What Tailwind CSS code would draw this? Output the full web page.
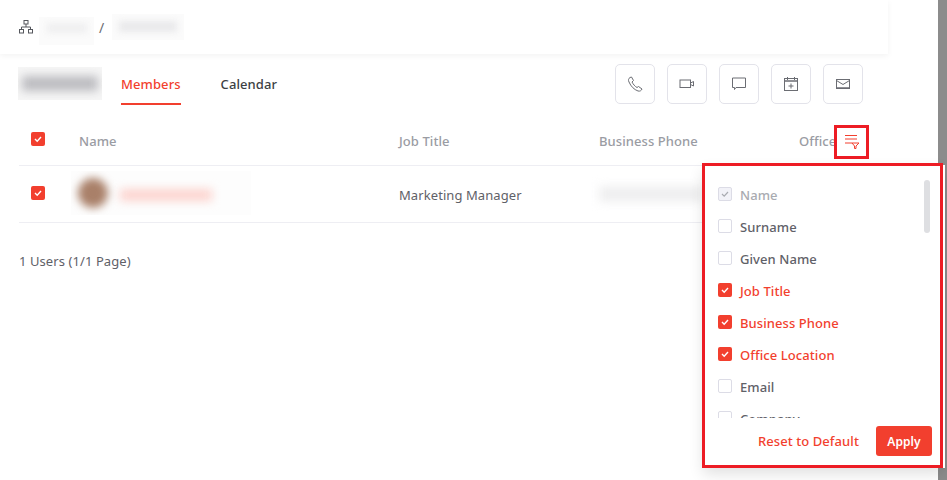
<!DOCTYPE html>
<html lang="en">
<head>
  <meta charset="UTF-8" />
  <title>Members</title>
  <script src="https://cdn.jsdelivr.net/npm/@tailwindcss/browser@4"></script>
</head>
<body class="bg-white">
  <div class="relative w-[947px] h-[480px] overflow-hidden flex font-['Noto_Sans',sans-serif] text-[13px] tracking-[0.08px] text-[#5f6168]">
    <!-- Page -->
    <main class="w-[938px] h-full flex flex-col">
      <!-- Breadcrumb -->
      <header class="w-[888px] h-[54px] shrink-0 flex items-center pl-[18px] shadow-[0_2px_6px_rgba(0,0,0,0.05)]">
        <svg class="w-[16px] h-[16px] text-[#55575d]" viewBox="0 0 16 16" fill="none" stroke="currentColor" stroke-width="1">
          <rect x="6" y="1.500" width="4" height="3.500" />
          <rect x="1.500" y="10.500" width="4" height="3.500" />
          <rect x="10.500" y="10.500" width="4" height="3.500" />
          <path d="M8 5v3M3.500 10.500V8h9v2.500" />
        </svg>
        <div class="ml-[5px] mt-[8px] w-[55px] h-[28px] bg-[#fbfbfb] overflow-hidden flex items-start justify-center pt-[6px]">
          <div class="w-[40px] h-[10px] bg-[#efeff0] blur-[3px]"></div>
        </div>
        <span class="ml-[5px] text-[#6b6d73] text-[14px]">/</span>
        <div class="ml-[8px] -mt-[1px] w-[72px] h-[26px] bg-[#fbfbfb] overflow-hidden flex items-center justify-center">
          <div class="w-[58px] h-[11px] bg-[#e9e9eb] blur-[3px]"></div>
        </div>
      </header>

      <!-- Tabs and actions -->
      <div class="h-[64px] shrink-0 flex items-start pl-[18px] pr-[75px]">
        <div class="mt-[13px] w-[84px] h-[33px] bg-[#f6f6f6] overflow-hidden flex items-center justify-center">
          <div class="w-[76px] h-[15px] bg-[#bcbcc0] blur-[5px]"></div>
        </div>
        <nav class="flex ml-[19px] text-[13px] font-medium">
          <a class="mt-[21px] h-[30px] border-b-2 border-[#f23f2e] text-[#f23f2e]">Members</a>
          <a class="mt-[21px] ml-[40px] text-[#3d3f44]">Calendar</a>
        </nav>
        <div class="ml-auto mt-[10px] flex gap-[12px]">
          <button class="w-[40px] h-[40px] flex items-center justify-center rounded-[5px] border border-[#e3e3ea] text-[#6b6d73]">
            <svg class="w-[16px] h-[16px]" viewBox="0 0 16 16" fill="none" stroke="currentColor" stroke-width="1"><path d="M3 1.500C1.500 2.500 1 4 2 6c2 4.500 5 7.500 9 9 2 .5 3.500-.5 4-2l-3.500-2.500L10 11.500C8 10.500 6 8 5 6l1.500-1.500-2-3.500Z" /></svg>
          </button>
          <button class="w-[40px] h-[40px] flex items-center justify-center rounded-[5px] border border-[#e3e3ea] text-[#6b6d73]">
            <svg class="w-[16px] h-[16px]" viewBox="0 0 16 16" fill="none" stroke="currentColor" stroke-width="1"><rect x="1" y="4" width="10.500" height="7.500" /><path d="M11.500 7l3-1.500v4.500l-3-1.500" /></svg>
          </button>
          <button class="w-[40px] h-[40px] flex items-center justify-center rounded-[5px] border border-[#e3e3ea] text-[#6b6d73]">
            <svg class="w-[16px] h-[16px]" viewBox="0 0 16 16" fill="none" stroke="currentColor" stroke-width="1"><path d="M1.500 2h13v9.500H5l-1.500 2v-2h-2Z" /></svg>
          </button>
          <button class="w-[40px] h-[40px] flex items-center justify-center rounded-[5px] border border-[#e3e3ea] text-[#6b6d73]">
            <svg class="w-[16px] h-[16px]" viewBox="0 0 16 16" fill="none" stroke="currentColor" stroke-width="1"><rect x="1.500" y="2.500" width="13" height="12" /><path d="M1.500 5h13" stroke-width="1.500" /><path d="M4.500 1v3M11.500 1v3M8 7.500v5M5.500 10h5" /></svg>
          </button>
          <button class="w-[40px] h-[40px] flex items-center justify-center rounded-[5px] border border-[#e3e3ea] text-[#6b6d73]">
            <svg class="w-[16px] h-[16px]" viewBox="0 0 16 16" fill="none" stroke="currentColor" stroke-width="1"><rect x="1.500" y="3.500" width="13" height="9" /><path d="M1.500 4.500 8 8.500l6.500-4" /><path d="M1.500 12h13" stroke-width="1.500" /></svg>
          </button>
        </div>
      </div>

      <!-- Table -->
      <div class="ml-[19px] w-[848px]">
        <div class="h-[48px] flex items-center border-b border-[#eeeef3] font-medium text-[#9a9ca3]">
          <span class="ml-[12px] mb-[5px] w-[14px] h-[14px] rounded-[2px] bg-[#f23f2e] flex items-center justify-center">
            <svg class="w-[10px] h-[10px]" viewBox="0 0 10 10" fill="none" stroke="white" stroke-width="1.400"><path d="M2 5l2.200 2.200L8 3" /></svg>
          </span>
          <span class="ml-[34px] w-[320px]">Name</span>
          <span class="w-[200px]">Job Title</span>
          <span class="w-[200px]">Business Phone</span>
          <span>Office</span>
        </div>
        <div class="h-[57px] flex items-center border-b border-[#eeeef3]">
          <span class="ml-[12px] mb-[2px] w-[14px] h-[14px] rounded-[2px] bg-[#f23f2e] flex items-center justify-center">
            <svg class="w-[10px] h-[10px]" viewBox="0 0 10 10" fill="none" stroke="white" stroke-width="1.400"><path d="M2 5l2.200 2.200L8 3" /></svg>
          </span>
          <div class="ml-[26px] w-[328px] flex items-center">
            <div class="w-[180px] h-[44px] mb-[2px] bg-[#fdfdfd] overflow-hidden flex items-center pl-[7px]">
              <div class="w-[30px] h-[30px] rounded-full bg-[#a98069] blur-[4px]"></div>
              <div class="ml-[12px] mt-[3px] w-[92px] h-[12px] bg-[#fcd3ce] blur-[5px]"></div>
            </div>
          </div>
          <span class="w-[200px] pt-[3px] text-[#5f6168]">Marketing Manager</span>
          <div class="w-[104px] h-[16px] bg-[#efeff0] blur-[5px]"></div>
        </div>
        <p class="mt-[29px] text-[#5f6168]">1 Users (1/1 Page)</p>
      </div>
    </main>

    <!-- Scrollbar -->
    <div class="w-[9px] h-full bg-[#8c8c8c]"></div>

    <!-- Column filter button highlight -->
    <button class="absolute left-[834px] top-[125px] w-[35px] h-[34px] border-[3px] border-[#ed1c24] bg-white flex items-center justify-center">
      <svg class="w-[16px] h-[16px]" viewBox="0 0 16 16" fill="none" stroke="#f23f2e" stroke-width="1"><path d="M1 1.500h12M1 5h12M1 9h14l-3 3v2.500h-1.500V12L8 9" /></svg>
    </button>

    <!-- Column picker -->
    <div class="absolute left-[703px] top-[165px] w-[242px] h-[303px] bg-white shadow-[0_6px_14px_rgba(0,0,0,0.12)]">
      <div class="absolute -left-px -top-[2px] w-[241px] h-[305px] border-[3px] border-[#ed1c24]">
        <div class="relative h-[252px] overflow-hidden pl-[13px] pt-[12px] font-medium">
          <label class="h-[32px] flex items-center gap-[8px] text-[#a9abb1]">
            <span class="w-[14px] h-[14px] rounded-[2px] border border-[#dcdce6] bg-[#f2f2f8] flex items-center justify-center">
              <svg class="w-[10px] h-[10px]" viewBox="0 0 10 10" fill="none" stroke="#a9abb1" stroke-width="1.200"><path d="M2 5l2.200 2.200L8 3" /></svg>
            </span><span class="pt-[3px]">Name</span>
          </label>
          <label class="h-[32px] flex items-center gap-[8px]">
            <span class="w-[14px] h-[14px] rounded-[2px] border border-[#dcdce6]"></span><span class="pt-[3px]">Surname</span>
          </label>
          <label class="h-[32px] flex items-center gap-[8px]">
            <span class="w-[14px] h-[14px] rounded-[2px] border border-[#dcdce6]"></span><span class="pt-[3px]">Given Name</span>
          </label>
          <label class="h-[32px] flex items-center gap-[8px] text-[#f23f2e]">
            <span class="w-[14px] h-[14px] rounded-[2px] bg-[#f23f2e] flex items-center justify-center">
              <svg class="w-[10px] h-[10px]" viewBox="0 0 10 10" fill="none" stroke="white" stroke-width="1.400"><path d="M2 5l2.200 2.200L8 3" /></svg>
            </span><span class="pt-[3px]">Job Title</span>
          </label>
          <label class="h-[32px] flex items-center gap-[8px] text-[#f23f2e]">
            <span class="w-[14px] h-[14px] rounded-[2px] bg-[#f23f2e] flex items-center justify-center">
              <svg class="w-[10px] h-[10px]" viewBox="0 0 10 10" fill="none" stroke="white" stroke-width="1.400"><path d="M2 5l2.200 2.200L8 3" /></svg>
            </span><span class="pt-[3px]">Business Phone</span>
          </label>
          <label class="h-[32px] flex items-center gap-[8px] text-[#f23f2e]">
            <span class="w-[14px] h-[14px] rounded-[2px] bg-[#f23f2e] flex items-center justify-center">
              <svg class="w-[10px] h-[10px]" viewBox="0 0 10 10" fill="none" stroke="white" stroke-width="1.400"><path d="M2 5l2.200 2.200L8 3" /></svg>
            </span><span class="pt-[3px]">Office Location</span>
          </label>
          <label class="h-[32px] flex items-center gap-[8px]">
            <span class="w-[14px] h-[14px] rounded-[2px] border border-[#dcdce6]"></span><span class="pt-[3px]">Email</span>
          </label>
          <label class="h-[32px] flex items-center gap-[8px]">
            <span class="w-[14px] h-[14px] rounded-[2px] border border-[#dcdce6]"></span><span class="pt-[3px]">Company</span>
          </label>
          <div class="absolute right-[10px] top-[14px] w-[6px] h-[53px] rounded-full bg-[#dedfe2]"></div>
        </div>
        <div class="flex items-center justify-end pr-[8px] mt-[8px] font-medium">
          <button class="text-[#f23f2e] mr-[17px] pt-[2px]">Reset to Default</button>
          <button class="w-[56px] h-[30px] rounded-[3px] bg-[#f23f2e] text-white text-[12px] font-semibold pt-[2px]">Apply</button>
        </div>
      </div>
    </div>
  </div>
</body>
</html>
